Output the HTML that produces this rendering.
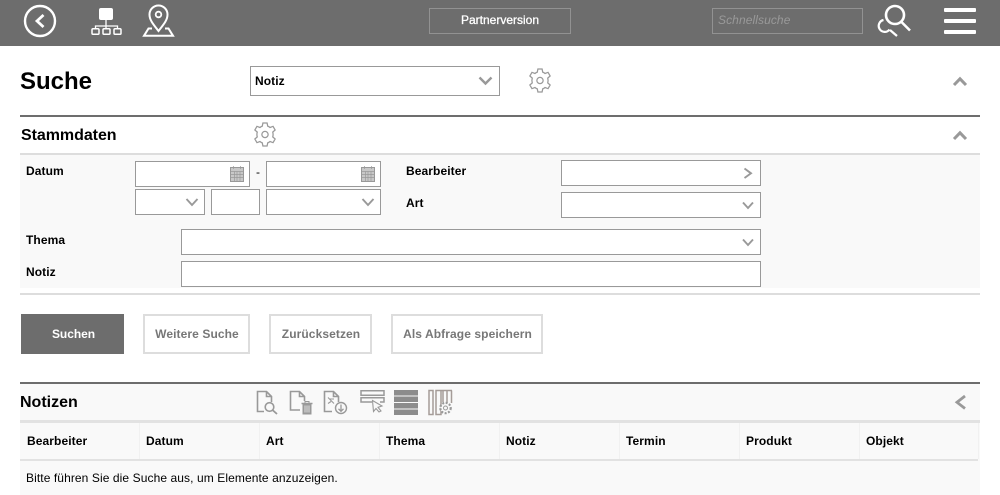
<!DOCTYPE html>
<html lang="de"><head><meta charset="utf-8"><title>Suche</title>
<style>
html,body{margin:0;padding:0;background:#fff;width:1000px;height:495px;overflow:hidden}
body{position:relative;font-family:"Liberation Sans",Arial,sans-serif;color:#000}
.a{position:absolute;box-sizing:border-box}
.t{position:absolute;white-space:nowrap;font-weight:bold;font-size:12px;line-height:14px;letter-spacing:.09px}
.i{position:absolute;box-sizing:border-box;border:1px solid #999;background:#fff}
.b{position:absolute;box-sizing:border-box;border:2px solid #ddd;background:#fff;color:#777;font-weight:bold;font-size:12px;text-align:center;line-height:36px;height:40px;top:314px;letter-spacing:.09px;padding-left:1px}
.s{position:absolute;left:0;top:0;pointer-events:none}
svg{overflow:visible}
</style></head><body>
<div class="a" style="left:0;top:0;width:1000px;height:46px;background:#6d6d6d"></div>

<svg class="s" width="250" height="46" fill="none" stroke="#fff" stroke-width="2">
<circle cx="40" cy="21" r="15" stroke-width="2.400"/>
<path d="M43.500 15L37 21L43.500 27" stroke-width="2.800"/>
<rect x="99" y="8" width="14" height="12" rx="2" fill="#fff" stroke="none"/>
<path d="M106 20V26M95.500 29V26H117.500V29M106 26V29" stroke-width="1.300"/>
<rect x="92" y="28.700" width="7" height="5.500" rx="1" stroke-width="1.500"/>
<rect x="103" y="28.700" width="7" height="5.500" rx="1" stroke-width="1.500"/>
<rect x="114" y="28.700" width="7" height="5.500" rx="1" stroke-width="1.500"/>
<path d="M158.500 31C153 24 149.500 20 149.500 14.500A9 9 0 0 1 167.500 14.500C167.500 20 164 24 158.500 31Z" stroke-width="2"/>
<circle cx="158.500" cy="14.500" r="2.800" stroke-width="1.800"/>
<path d="M152 28.500H148.500L144 35.800H173L168.500 28.500H165" stroke-width="2"/>
</svg>

<div class="a" style="left:429px;top:8px;width:142px;height:26px;border:1px solid #929292"></div>
<div class="t" style="left:429px;width:142px;text-align:center;top:13px;color:#fff;font-weight:normal;letter-spacing:0;-webkit-text-stroke:.3px #fff">Partnerversion</div>
<div class="a" style="left:712px;top:8px;width:151px;height:26px;border:1px solid #929292"></div>
<div class="t" style="left:718px;top:13px;color:#999;font-weight:normal;font-style:italic">Schnellsuche</div>

<svg class="s" style="left:870px" width="50" height="46" fill="none" stroke="#fff">
<circle cx="25" cy="15" r="9" stroke-width="2.600"/>
<path d="M31.500 22L40 30.500" stroke-width="2.600"/>
<path d="M13.500 20A6 6 0 1 0 19.500 29.500" stroke-width="2.200"/>
<path d="M20 30L27 36" stroke-width="2.200"/>
</svg>
<div class="a" style="left:944px;top:8px;width:32px;height:4px;background:#fff;border-radius:1px"></div>
<div class="a" style="left:944px;top:19px;width:32px;height:4px;background:#fff;border-radius:1px"></div>
<div class="a" style="left:944px;top:30px;width:32px;height:4px;background:#fff;border-radius:1px"></div>

<div class="t" style="left:20px;top:68px;font-size:24px;line-height:28px;letter-spacing:0">Suche</div>
<div class="i" style="left:250px;top:66px;width:250px;height:30px"></div>
<div class="t" style="left:255px;top:74px">Notiz</div>

<svg class="s" style="left:528px;top:69px" width="24" height="23" viewBox="2 1 20 22" fill="none" stroke="#999" stroke-width="1.200">
<path d="M10 1H14L14.600 4A8.200 8.200 0 0 1 16.800 5.300L19.700 4.200L21.700 7.700L19.400 9.700A8.200 8.200 0 0 1 19.400 14.300L21.700 16.300L19.700 19.800L16.800 18.700A8.200 8.200 0 0 1 14.600 20L14 23H10L9.400 20A8.200 8.200 0 0 1 7.200 18.700L4.300 19.800L2.300 16.300L4.600 14.300A8.200 8.200 0 0 1 4.600 9.700L2.300 7.700L4.300 4.200L7.200 5.300A8.200 8.200 0 0 1 9.400 4Z"/>
<circle cx="12" cy="12" r="3"/>
</svg>

<div class="a" style="left:20px;top:115px;width:960px;height:2px;background:#6d6d6d"></div>
<div class="t" style="left:21px;top:126px;font-size:16px;line-height:19px;letter-spacing:-.05px">Stammdaten</div>
<svg class="s" style="left:253px;top:123px" width="24" height="23" viewBox="2 1 20 22" fill="none" stroke="#999" stroke-width="1.200">
<path d="M10 1H14L14.600 4A8.200 8.200 0 0 1 16.800 5.300L19.700 4.200L21.700 7.700L19.400 9.700A8.200 8.200 0 0 1 19.400 14.300L21.700 16.300L19.700 19.800L16.800 18.700A8.200 8.200 0 0 1 14.600 20L14 23H10L9.400 20A8.200 8.200 0 0 1 7.200 18.700L4.300 19.800L2.300 16.300L4.600 14.300A8.200 8.200 0 0 1 4.600 9.700L2.300 7.700L4.300 4.200L7.200 5.300A8.200 8.200 0 0 1 9.400 4Z"/>
<circle cx="12" cy="12" r="3"/>
</svg>
<div class="a" style="left:20px;top:153px;width:960px;height:2px;background:#ddd"></div>
<div class="a" style="left:20px;top:155px;width:960px;height:133px;background:#f9f9f9"></div>
<div class="a" style="left:20px;top:293px;width:960px;height:2px;background:#ddd"></div>

<div class="t" style="left:26px;top:164px">Datum</div>
<div class="t" style="left:406px;top:164px">Bearbeiter</div>
<div class="t" style="left:406px;top:196px">Art</div>
<div class="t" style="left:26px;top:233px">Thema</div>
<div class="t" style="left:26px;top:265px">Notiz</div>
<div class="t" style="left:256px;top:165px;font-weight:normal">-</div>

<div class="i" style="left:135px;top:161px;width:115px;height:26px"></div>
<div class="i" style="left:266px;top:161px;width:115px;height:26px"></div>
<div class="i" style="left:135px;top:189px;width:70px;height:26px"></div>
<div class="i" style="left:211px;top:189px;width:49px;height:26px"></div>
<div class="i" style="left:266px;top:189px;width:115px;height:26px"></div>
<div class="i" style="left:561px;top:160px;width:200px;height:26px"></div>
<div class="i" style="left:561px;top:192px;width:200px;height:26px"></div>
<div class="i" style="left:181px;top:229px;width:580px;height:26px"></div>
<div class="i" style="left:181px;top:261px;width:580px;height:26px"></div>

<div class="a" style="left:20px;top:382px;width:960px;height:2px;background:#6d6d6d"></div>
<div class="a" style="left:20px;top:384px;width:960px;height:111px;background:#f9f9f9"></div>

<svg class="s" width="1000" height="495" fill="none" stroke="#999">
<path d="M479.500 77.500L485.500 83.500L491.500 77.500" stroke-width="2.400"/>
<path d="M954 85L960 78.800L966 85" stroke-width="3"/>
<path d="M954 139L960 132.800L966 139" stroke-width="3"/>
<path d="M965 396L957 402.300L965 408.500" stroke-width="2.800"/>
<path d="M186.500 199L192 205L197.500 199" stroke-width="1.900"/>
<path d="M362.500 199L368 205L373.500 199" stroke-width="1.900"/>
<path d="M744.500 168.500L751 173.300L744.500 178" stroke-width="1.900"/>
<path d="M743 202.500L748 208L753 202.500" stroke-width="1.900"/>
<path d="M743 239.500L748 245L753 239.500" stroke-width="1.900"/>
<rect x="230.500" y="167.500" width="13" height="14" fill="#c8c8c8" stroke-width="1"/>
<path d="M233.500 166V169M240.500 166V169M230.500 171.500H243.500M230.500 174.500H243.500M230.500 177.500H243.500M234.500 171.500V181.500M237 171.500V181.500M240 171.500V181.500" stroke-width=".7"/>
<rect x="361.500" y="167.500" width="13" height="14" fill="#c8c8c8" stroke-width="1"/>
<path d="M364.500 166V169M371.500 166V169M361.500 171.500H374.500M361.500 174.500H374.500M361.500 177.500H374.500M365.500 171.500V181.500M368 171.500V181.500M371 171.500V181.500" stroke-width=".7"/>

<g stroke-width="1.600">
<path d="M264 411.500H257.500V391.500H266.500L271.500 396.500V402M266.500 391.500V396.500H271.500"/>
<circle cx="269.500" cy="407" r="4.300"/><path d="M272.500 410L277 414" stroke-width="1.800"/>
<path d="M300 410H290.500V391.500H299.500L304.500 396.500V401M299.500 391.500V396.500H304.500"/>
<path d="M301.500 403.500H312.500" stroke-width="1.500"/>
<path d="M303 403.500V414H311V403.500" fill="#999" stroke-width="1"/>
<path d="M305 405.500V412.500M307 405.500V412.500M309 405.500V412.500" stroke-width=".8" stroke="#f2f2f2"/>
<path d="M305 403V401.500H309V403" stroke-width="1"/>
<path d="M332 411.500H324.500V391.500H333.500L338.500 396.500V402M333.500 391.500V396.500H338.500"/>
<path d="M328 397.500L334 403.500M334 399H330M328 403.500L331 401.500" stroke-width="1.100"/>
<circle cx="341" cy="408" r="5.500" stroke-width="1.400"/><path d="M341 404.500V411M338.500 408.800L341 411.300L343.500 408.800" stroke-width="1.300"/>
<path d="M361 390.800H384V395.200H361Z" stroke-width="1.500"/>
<path d="M372 402H361V397.800H384V402H380" stroke-width="1.500"/>
<path d="M372.500 400.500L382 406L378 407.300L381 411L379 412L376 408.500L373.500 411.500Z" stroke-width="1.100" fill="#f9f9f9"/>
</g>
<g fill="#8c8c8c" stroke="none">
<rect x="394" y="390" width="24" height="5.500"/><rect x="394" y="396.500" width="24" height="5.500"/><rect x="394" y="403" width="24" height="5.500"/><rect x="394" y="409.500" width="24" height="5.500"/>
</g>
<g stroke-width="1.500" stroke="#a59c98">
<path d="M429 390.500H433V414.500H429ZM436 390.500H441V414.500H436ZM443 390.500V402M447 390.500V402M451.500 390.500V403M441 390.500H452"/>
</g>
<circle cx="445.500" cy="408" r="5.200" stroke-width="2.200" stroke-dasharray="2 1.500" fill="#f9f9f9"/>
<circle cx="445.500" cy="408" r="2" stroke-width="1"/>
</svg>

<div class="a" style="left:21px;top:314px;width:103px;height:40px;background:#6d6d6d;color:#fff;font-weight:bold;font-size:12px;text-align:center;line-height:40px;padding-left:2px;letter-spacing:-.05px">Suchen</div>
<div class="b" style="left:143px;width:107px">Weitere Suche</div>
<div class="b" style="left:269px;width:103px">Zurücksetzen</div>
<div class="b" style="left:391px;width:152px">Als Abfrage speichern</div>

<div class="t" style="left:20px;top:393px;font-size:16px;line-height:19px;letter-spacing:0">Notizen</div>
<div class="a" style="left:20px;top:420px;width:960px;height:3px;background:#e2e2e2"></div>
<div class="a" style="left:20px;top:459px;width:958px;height:2px;background:#e2e2e2"></div>
<div class="a" style="left:139px;top:423px;width:1px;height:36px;background:#f1f1f1"></div>
<div class="a" style="left:259px;top:423px;width:1px;height:36px;background:#f1f1f1"></div>
<div class="a" style="left:379px;top:423px;width:1px;height:36px;background:#f1f1f1"></div>
<div class="a" style="left:499px;top:423px;width:1px;height:36px;background:#f1f1f1"></div>
<div class="a" style="left:619px;top:423px;width:1px;height:36px;background:#f1f1f1"></div>
<div class="a" style="left:739px;top:423px;width:1px;height:36px;background:#f1f1f1"></div>
<div class="a" style="left:859px;top:423px;width:1px;height:36px;background:#f1f1f1"></div>
<div class="a" style="left:978px;top:423px;width:1px;height:36px;background:#f1f1f1"></div>
<div class="t" style="left:27px;top:434px">Bearbeiter</div>
<div class="t" style="left:146px;top:434px">Datum</div>
<div class="t" style="left:266px;top:434px">Art</div>
<div class="t" style="left:386px;top:434px">Thema</div>
<div class="t" style="left:506px;top:434px">Notiz</div>
<div class="t" style="left:626px;top:434px">Termin</div>
<div class="t" style="left:746px;top:434px">Produkt</div>
<div class="t" style="left:866px;top:434px">Objekt</div>
<div class="t" style="left:26px;top:471px;font-weight:normal">Bitte führen Sie die Suche aus, um Elemente anzuzeigen.</div>
</body></html>
